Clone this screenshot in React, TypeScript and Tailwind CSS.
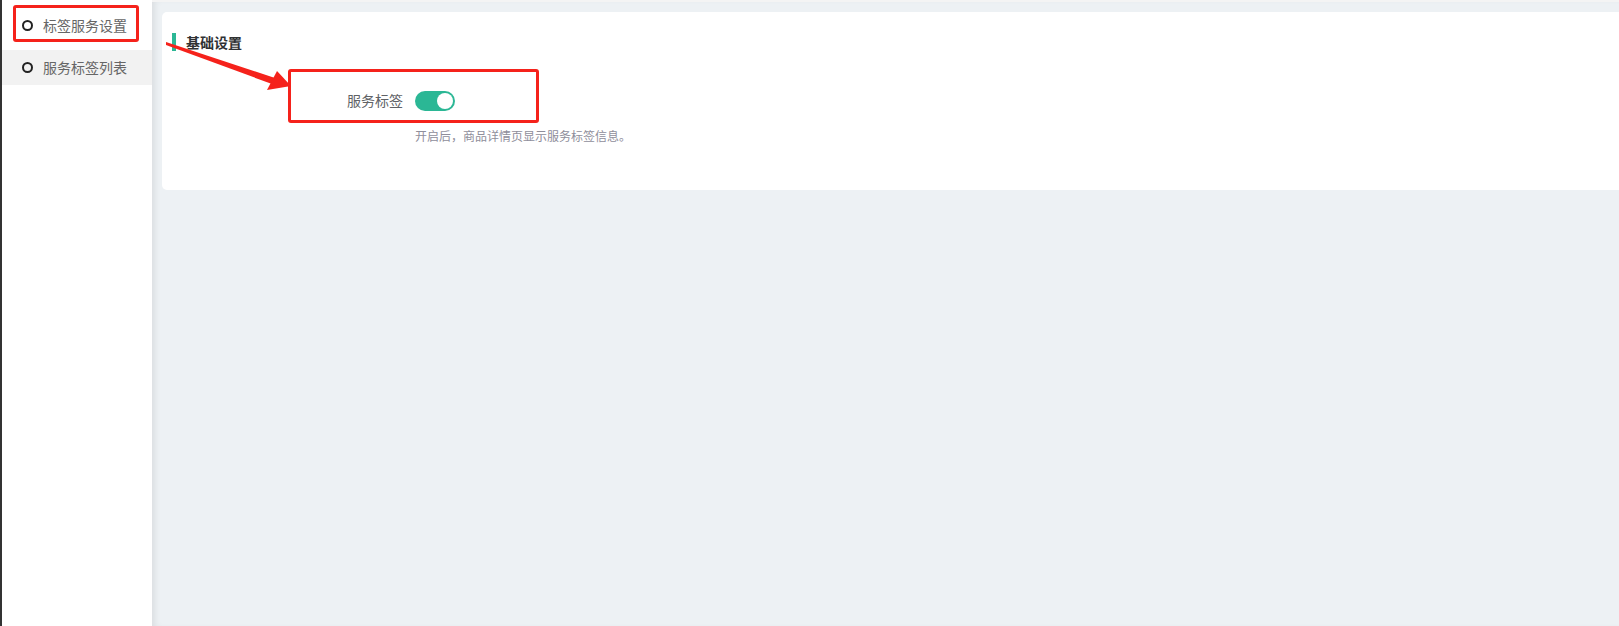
import React from "react";

const font = { fontFamily: '"Noto Sans CJK SC", "Noto Sans", sans-serif' };

function NavItem({ label, active }: { label: string; active?: boolean }) {
  return (
    <div
      className={`flex items-center pl-[20px] text-[14px] text-[#666] ${
        active ? "h-[50px] bg-white" : "h-[35px] bg-[#f2f2f2]"
      }`}
    >
      <span className="w-[11px] h-[11px] rounded-full border-2 border-[#222] mr-[10px]" />
      <span>{label}</span>
    </div>
  );
}

export default function App() {
  return (
    <div className="relative flex h-[626px] w-[1619px] overflow-hidden bg-[#edf1f4]" style={font}>
      <div className="w-[2px] bg-[#333]" />
      <div className="w-[150px] bg-white rounded-tr-[10px] flex flex-col">
        <NavItem label="标签服务设置" active />
        <NavItem label="服务标签列表" />
      </div>
      <div className="flex-1 bg-[#edf1f4] pl-[10px] pt-[12px] shadow-[inset_6px_0_6px_-3px_rgba(0,0,0,0.08)] border-t-[2px] border-[#f4f4f4]">
        <div className="bg-white rounded-l-[5px] h-[178px] -mt-[2px] pt-[21px] pl-[10px]">
          <div className="flex items-center h-[18px]">
            <span className="w-[4px] h-[18px] bg-[#2bb795]" />
            <span className="ml-[10px] text-[14px] font-bold text-[#303133]">基础设置</span>
          </div>
          <div className="flex items-center mt-[39px]">
            <div className="w-[231px] text-right text-[14px] text-[#606266]">服务标签</div>
            <div className="ml-[12px] w-[40px] h-[20px] rounded-full bg-[#2bb795] flex items-center justify-end pr-[2px]">
              <span className="w-[16px] h-[16px] rounded-full bg-white" />
            </div>
          </div>
          <div className="ml-[243px] mt-[16px] text-[12px] text-[#8f8e9b]">开启后，商品详情页显示服务标签信息。</div>
        </div>
      </div>

      {/* annotations */}
      <div className="absolute left-[13px] top-[5px] w-[126px] h-[37px] border-[3px] border-[#f5221b] rounded-[3px]" />
      <div className="absolute left-[288px] top-[69px] w-[251px] h-[54px] border-[3px] border-[#f5221b] rounded-[3px]" />
      <svg className="absolute left-0 top-0" width="1619" height="626" viewBox="0 0 1619 626">
        <polygon points="166,42 275,78 272,84 166,45" fill="#f5221b" />
        <polygon points="291,86 267,90 277,71" fill="#f5221b" />
      </svg>
    </div>
  );
}
